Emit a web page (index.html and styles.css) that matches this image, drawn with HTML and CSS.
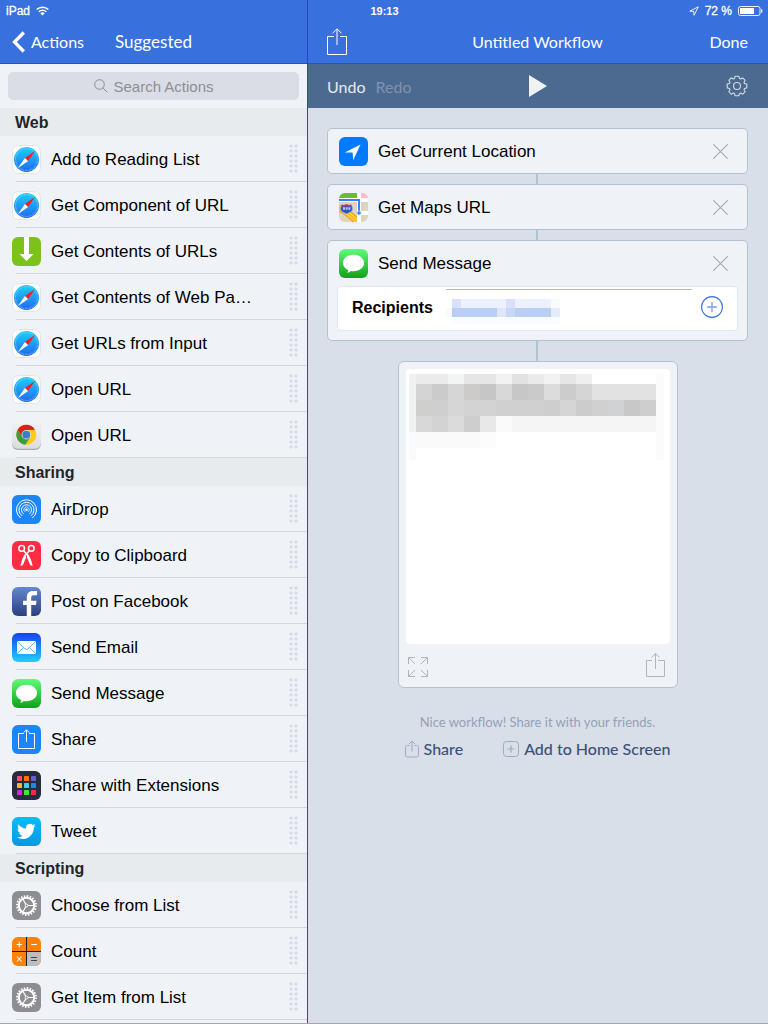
FILE: index.html
```html
<!DOCTYPE html>
<html lang="en">
<head>
    <meta charset="UTF-8">
    <meta name="viewport" content="width=device-width, initial-scale=1">
    <title>Untitled Workflow</title>
    <link rel="stylesheet" href="styles.css">
</head>
<body>
    <!-- icon sprites -->
    <svg class="sprites" width="0" height="0" aria-hidden="true">
        <defs>
            <clipPath id="tile"><rect width="29" height="29" rx="6"/></clipPath>
            <linearGradient id="g-safari" x2="0" y2="1"><stop offset="0" stop-color="#1ad2fc"/><stop offset="1" stop-color="#2167ee"/></linearGradient>
            <linearGradient id="g-chrome" x2="0" y2="1"><stop offset="0" stop-color="#f3f3f3"/><stop offset="1" stop-color="#dcdcdc"/></linearGradient>
            <linearGradient id="g-facebook" x2="0" y2="1"><stop offset="0" stop-color="#6488d0"/><stop offset="1" stop-color="#2b407c"/></linearGradient>
            <linearGradient id="g-mail" x2="0" y2="1"><stop offset="0" stop-color="#1a40ea"/><stop offset="1" stop-color="#1fd0fc"/></linearGradient>
            <linearGradient id="g-message" x2="0" y2="1"><stop offset="0" stop-color="#61fb79"/><stop offset="1" stop-color="#10a117"/></linearGradient>
            <linearGradient id="g-twitter" x2="0" y2="1"><stop offset="0" stop-color="#09bdf5"/><stop offset="1" stop-color="#0797e6"/></linearGradient>
        </defs>
        <symbol id="i-safari" viewBox="0 0 29 29">
            <rect x=".5" y=".5" width="28" height="28" rx="6" fill="#fff" stroke="#e3e4e6"/>
            <circle cx="14.5" cy="14.5" r="12.5" fill="url(#g-safari)"/>
            <circle cx="14.5" cy="14.5" r="11" fill="none" stroke="#8fd2fb" stroke-width="1.2" stroke-dasharray=".5 .9"/>
            <path d="M23.2 5.8 12.9 12.9 16.1 16.1Z" fill="#fb1c1e"/>
            <path d="M5.8 23.2 12.9 12.9 16.1 16.1Z" fill="#fff"/>
        </symbol>
        <symbol id="i-download" viewBox="0 0 29 29">
            <rect width="29" height="29" rx="6" fill="#7dc11b"/>
            <path d="M12 0H17V17H21.5L14.5 24 7.5 17H12Z" fill="#fff"/>
        </symbol>
        <symbol id="i-chrome" viewBox="0 0 29 29">
            <rect y="1" width="29" height="28" rx="6" fill="#a9a9ab"/>
            <rect width="29" height="27.8" rx="6" fill="url(#g-chrome)"/>
            <g transform="translate(14.3 13.7)">
                <circle r="10" fill="#fccb16"/>
                <path d="M-8.66-5A10 10 0 0 1 8.66-5L0-4.8-4 2.3Z" fill="#d8211b"/>
                <path d="M-8.66-5A10 10 0 0 0-1 9.95L4 2.3-4 2.3Z" fill="#3a9c3c"/>
                <circle r="4.7" fill="#dfe6ec"/>
                <circle r="3.9" fill="#3d7dca"/>
            </g>
        </symbol>
        <symbol id="i-airdrop" viewBox="0 0 29 29">
            <rect width="29" height="29" rx="6" fill="#1b85fa"/>
            <g fill="none" stroke="#fff">
                <path d="M8.8 23A10 10 0 1 1 20.2 23"/>
                <path d="M10.2 20.9A7.5 7.5 0 1 1 18.8 20.9"/>
                <path d="M11.6 18.9A5 5 0 1 1 17.4 18.9"/>
                <path d="M12.9 16.9A2.7 2.7 0 1 1 16.1 16.9" stroke-width=".7"/>
            </g>
            <circle cx="14.5" cy="14.8" r="1.3" fill="#fff"/>
        </symbol>
        <symbol id="i-scissors" viewBox="0 0 29 29">
            <rect width="29" height="29" rx="6" fill="#ff2d43"/>
            <g fill="none" stroke="#fff" stroke-width="1.5">
                <circle cx="9.7" cy="7.4" r="2.8"/>
                <circle cx="19.3" cy="7.4" r="2.8"/>
                <path d="M11.4 9.6 15.5 14M17.6 9.6 13.5 14"/>
            </g>
            <path d="M14.2 12.5 14 16.5 11 23.8Q9.4 25.2 8.4 24.4 9.2 19.5 12.2 14Z" fill="#fff"/>
            <path d="M14.8 12.5 15 16.5 18 23.8Q19.6 25.2 20.6 24.4 19.8 19.5 16.8 14Z" fill="#fff"/>
        </symbol>
        <symbol id="i-facebook" viewBox="0 0 29 29">
            <rect width="29" height="29" rx="6" fill="url(#g-facebook)"/>
            <path d="M14.8 29V18H11V13.8H14.8V11C14.8 6 17 4 21 4H25V8.3H22C20 8.3 19.2 9 19.2 11V13.8H24.5L24 18H19.2V29Z" fill="#fff"/>
        </symbol>
        <symbol id="i-mail" viewBox="0 0 29 29">
            <rect width="29" height="29" rx="6" fill="url(#g-mail)"/>
            <rect x="5" y="8" width="19" height="13" rx="1" fill="#fff"/>
            <path d="M5.3 8.5 13 15.8Q14.5 17.2 16 15.8L23.7 8.5M5.3 20.5 11.5 14.5M23.7 20.5 17.5 14.5" fill="none" stroke="#3d97f5" stroke-width=".8"/>
        </symbol>
        <symbol id="i-message" viewBox="0 0 29 29">
            <rect width="29" height="29" rx="6" fill="url(#g-message)"/>
            <path d="M14.5 5.8C20.4 5.8 25 9.3 25 14S20.4 22.2 14.5 22.2Q13 22.2 11.8 22 10.5 23.6 8.2 23.8 9.3 22.6 9.3 21.2C6 19.7 4 17 4 14 4 9.3 8.6 5.8 14.5 5.8Z" fill="#fff"/>
        </symbol>
        <symbol id="i-sharetile" viewBox="0 0 29 29">
            <rect width="29" height="29" rx="6" fill="#1b85fa"/>
            <path d="M12 8.5H6.5V23.5H22.5V8.5H17M14.5 17V5M11.7 7.5 14.5 4.7 17.3 7.5" fill="none" stroke="#fff"/>
        </symbol>
        <symbol id="i-extensions" viewBox="0 0 29 29">
            <rect width="29" height="29" rx="6" fill="#262b41"/>
            <rect x="5" y="5" width="5" height="5" rx=".6" fill="#ff4f6c"/>
            <rect x="12" y="5" width="5" height="5" rx=".6" fill="#ff7410"/>
            <rect x="19" y="5" width="5" height="5" rx=".6" fill="#6c59e2"/>
            <rect x="5" y="12" width="5" height="5" rx=".6" fill="#ffb61a"/>
            <rect x="12" y="12" width="5" height="5" rx=".6" fill="#44d3dc"/>
            <rect x="19" y="12" width="5" height="5" rx=".6" fill="#1c86fb"/>
            <rect x="5" y="19" width="5" height="5" rx=".6" fill="#d424dc"/>
            <rect x="12" y="19" width="5" height="5" rx=".6" fill="#41e635"/>
            <rect x="19" y="19" width="5" height="5" rx=".6" fill="#ff2a41"/>
        </symbol>
        <symbol id="i-twitter" viewBox="0 0 29 29">
            <rect width="29" height="29" rx="6" fill="url(#g-twitter)"/>
            <path transform="translate(5 5) scale(.78)" fill="#fff" d="M23.953 4.570a10 10 0 0 1-2.825.775 4.958 4.958 0 0 0 2.163-2.723c-.951.555-2.005.959-3.127 1.184a4.920 4.920 0 0 0-8.384 4.482C7.690 8.095 4.067 6.130 1.640 3.162a4.822 4.822 0 0 0-.666 2.475c0 1.710.87 3.213 2.188 4.096a4.904 4.904 0 0 1-2.228-.616v.06a4.923 4.923 0 0 0 3.946 4.827 4.996 4.996 0 0 1-2.212.085 4.936 4.936 0 0 0 4.604 3.417 9.867 9.867 0 0 1-6.102 2.105c-.39 0-.779-.023-1.170-.067a13.995 13.995 0 0 0 7.557 2.209c9.053 0 13.998-7.496 13.998-13.985 0-.21 0-.42-.015-.63A9.935 9.935 0 0 0 24 4.590z"/>
        </symbol>
        <symbol id="i-settings" viewBox="0 0 29 29">
            <rect width="29" height="29" rx="6" fill="#8e8d92"/>
            <g fill="none" stroke="#fff">
                <circle cx="14.5" cy="14.5" r="7.7" stroke-width="2"/>
                <circle cx="14.5" cy="14.5" r="9.4" stroke-width="2" stroke-dasharray="1.500 1.453"/>
                <path d="M16 14.5H22M13.800 13.200 10.700 8M13.800 15.800 10.700 21" stroke-width="1.200"/>
                <circle cx="14.5" cy="14.5" r="1.4"/>
            </g>
        </symbol>
        <symbol id="i-calculator" viewBox="0 0 29 29">
            <g clip-path="url(#tile)">
                <rect width="29" height="29" fill="#ff8208"/>
                <rect x="15" y="15" width="14" height="14" fill="#bdbdc0"/>
                <path d="M14.5 0V29M0 14.5H29" stroke="#231d18"/>
                <path d="M4.500 7.500H10M7.250 4.700V10.300M19 7.500H25M5 19.500 9.500 24.500M9.500 19.500 5 24.500" stroke="#fff" stroke-width="1.100"/>
                <path d="M19 20.500H25M19 23.500H25" stroke="#444" stroke-width="1.100"/>
            </g>
        </symbol>
        <symbol id="i-location" viewBox="0 0 29 29">
            <rect width="29" height="29" rx="6" fill="#007aff"/>
            <path d="M21.500 7.500 5.800 15.600 13.600 15.400 14.200 23.300Z" fill="#fff"/>
        </symbol>
        <symbol id="i-maps" viewBox="0 0 29 29">
            <g clip-path="url(#tile)">
                <rect width="29" height="29" fill="#ddd5c0"/>
                <rect width="18" height="5" fill="#67bf2f"/>
                <rect x="22" width="7" height="5" fill="#fdbccb"/>
                <path d="M18 0H22V29H18ZM0 5H29V9H0ZM18 18H29V22H18Z" fill="#fff"/>
                <path d="M0 15C8 18 12 23 20 30" fill="none" stroke="#e99a19" stroke-width="7"/>
                <path d="M0 15C8 18 12 23 20 30" fill="none" stroke="#fdd02b" stroke-width="5"/>
                <path d="M0 15C8 18 12 23 20 30" fill="none" stroke="#f2aa1d" stroke-width=".8"/>
                <path d="M18 20V29H22V22Z" fill="#fff"/>
                <path d="M0 7H20V19" fill="none" stroke="#3482f6" stroke-width="2"/>
                <circle cx="20" cy="20" r="2" fill="#3482f6" stroke="#b9d4fb" stroke-width=".8"/>
                <path d="M3 11.500Q5 12.500 7.500 11 10 12.500 12 11.500 15 16 12.500 18.500 10 19.500 7.500 21 5 19.500 2.500 18.500 0 16 3 11.500Z" fill="#2a55c9" stroke="#dbe3f5" stroke-width=".4"/>
                <path d="M3 11.500Q5 12.500 7.500 11 10 12.500 12 11.500L13 13.300H2Z" fill="#e1323c"/>
                <path d="M4 15.500H11.500" stroke="#b9c8f0" stroke-width="2.500" stroke-dasharray="2 .7"/>
            </g>
        </symbol>
        <symbol id="i-share" viewBox="0 0 20 28">
            <path d="M7 8.500H.5V26.500H19.500V8.500H13M10 17V1M5.500 5.300 10 .8 14.500 5.300" fill="none" stroke="currentColor"/>
        </symbol>
        <symbol id="i-close" viewBox="0 0 15 15">
            <path d="M.3.3 14.700 14.700M14.700.3.3 14.700" fill="none" stroke="currentColor" stroke-width="1.200"/>
        </symbol>
    </svg>

    <div class="statusbar">
        <div class="status-left">iPad
            <svg width="13" height="10" viewBox="0 0 13 10" fill="none" stroke="#fff" stroke-width="1.400">
                <path d="M.6 3.600A8.500 8.500 0 0 1 12.400 3.600M2.700 5.700A5.500 5.500 0 0 1 10.300 5.700"/>
                <path d="M4.300 7.300A3.200 3.200 0 0 1 8.700 7.300L6.500 9.500Z" fill="#fff" stroke="none"/>
            </svg>
        </div>
        <div class="status-time">19:13</div>
        <div class="status-right">
            <svg width="10" height="10" viewBox="0 0 10 10"><path d="M9.300.8.800 5.200 4.800 5.400 5 9.300Z" fill="none" stroke="#fff" stroke-width=".9"/></svg>
            <span>72 %</span>
            <svg width="25" height="10" viewBox="0 0 25 10"><rect x=".5" y=".5" width="21.500" height="9" rx="2" fill="none" stroke="#fff" stroke-width=".9"/><rect x="2" y="2" width="14" height="6" rx=".5" fill="#fff"/><path d="M23.500 3.200Q25 5 23.500 6.800Z" fill="#fff" stroke="#fff" stroke-width=".6"/></svg>
        </div>
    </div>

    <div class="app">
        <aside class="sidebar">
            <header class="nav">
                <a class="back" href="#">
                    <svg width="13" height="22" viewBox="0 0 13 22"><path d="M11.800 1.500 2.500 11 11.800 20.500" fill="none" stroke="#fff" stroke-width="3.300"/></svg>
                    Actions
                </a>
                <h2>Suggested</h2>
            </header>
            <label class="search">
                <svg width="14" height="14" viewBox="0 0 14 14" fill="none" stroke="#8e8e93"><circle cx="5.500" cy="5.500" r="4.800"/><path d="M9 9 13.300 13.300"/></svg>
                <input type="text" placeholder="Search Actions" aria-label="Search Actions">
            </label>

            <h3>Web</h3>
            <ul class="actions">
                <li><svg class="icon"><use href="#i-safari"/></svg><span class="name">Add to Reading List</span><span class="grip"></span></li>
                <li><svg class="icon"><use href="#i-safari"/></svg><span class="name">Get Component of URL</span><span class="grip"></span></li>
                <li><svg class="icon"><use href="#i-download"/></svg><span class="name">Get Contents of URLs</span><span class="grip"></span></li>
                <li><svg class="icon"><use href="#i-safari"/></svg><span class="name">Get Contents of Web Pa…</span><span class="grip"></span></li>
                <li><svg class="icon"><use href="#i-safari"/></svg><span class="name">Get URLs from Input</span><span class="grip"></span></li>
                <li><svg class="icon"><use href="#i-safari"/></svg><span class="name">Open URL</span><span class="grip"></span></li>
                <li><svg class="icon"><use href="#i-chrome"/></svg><span class="name">Open URL</span><span class="grip"></span></li>
            </ul>

            <h3>Sharing</h3>
            <ul class="actions">
                <li><svg class="icon"><use href="#i-airdrop"/></svg><span class="name">AirDrop</span><span class="grip"></span></li>
                <li><svg class="icon"><use href="#i-scissors"/></svg><span class="name">Copy to Clipboard</span><span class="grip"></span></li>
                <li><svg class="icon"><use href="#i-facebook"/></svg><span class="name">Post on Facebook</span><span class="grip"></span></li>
                <li><svg class="icon"><use href="#i-mail"/></svg><span class="name">Send Email</span><span class="grip"></span></li>
                <li><svg class="icon"><use href="#i-message"/></svg><span class="name">Send Message</span><span class="grip"></span></li>
                <li><svg class="icon"><use href="#i-sharetile"/></svg><span class="name">Share</span><span class="grip"></span></li>
                <li><svg class="icon"><use href="#i-extensions"/></svg><span class="name">Share with Extensions</span><span class="grip"></span></li>
                <li><svg class="icon"><use href="#i-twitter"/></svg><span class="name">Tweet</span><span class="grip"></span></li>
            </ul>

            <h3>Scripting</h3>
            <ul class="actions">
                <li><svg class="icon"><use href="#i-settings"/></svg><span class="name">Choose from List</span><span class="grip"></span></li>
                <li><svg class="icon"><use href="#i-calculator"/></svg><span class="name">Count</span><span class="grip"></span></li>
                <li><svg class="icon"><use href="#i-settings"/></svg><span class="name">Get Item from List</span><span class="grip"></span></li>
            </ul>
        </aside>

        <main class="editor">
            <header class="nav">
                <button type="button" class="share" aria-label="Share"><svg width="20" height="28"><use href="#i-share"/></svg></button>
                <h1>Untitled Workflow</h1>
                <button type="button" class="done">Done</button>
            </header>
            <div class="toolbar">
                <div class="history">
                    <button type="button">Undo</button>
                    <button type="button" disabled>Redo</button>
                </div>
                <button type="button" aria-label="Run"><svg width="18" height="22" viewBox="0 0 18 22"><path d="M0 0 18 11 0 22Z" fill="#eff1f5"/></svg></button>
                <button type="button" class="gear" aria-label="Settings">
                    <svg width="22" height="22" viewBox="-11 -11 22 22" fill="none" stroke="#d3dbe6" stroke-width="1.100">
                        <path d="M-1.900-9.800H1.900L2.500-7.500 3.800-7 5.700-8.200 8.200-5.700 7-3.800 7.500-2.500 9.800-1.900V1.900L7.500 2.500 7 3.800 8.200 5.700 5.700 8.200 3.800 7 2.500 7.500 1.900 9.800H-1.900L-2.500 7.500-3.800 7-5.700 8.200-8.200 5.700-7 3.800-7.500 2.500-9.800 1.900V-1.900L-7.500-2.500-7-3.800-8.200-5.700-5.700-8.200-3.800-7-2.500-7.500Z" stroke-linejoin="round"/>
                        <circle r="3.500"/>
                    </svg>
                </button>
            </div>

            <div class="canvas">
                <section class="card">
                    <div class="card-head">
                        <svg class="icon"><use href="#i-location"/></svg>
                        <span class="name">Get Current Location</span>
                        <button type="button" class="close" aria-label="Remove"><svg width="15" height="15"><use href="#i-close"/></svg></button>
                    </div>
                </section>
                <div class="link"></div>
                <section class="card">
                    <div class="card-head">
                        <svg class="icon"><use href="#i-maps"/></svg>
                        <span class="name">Get Maps URL</span>
                        <button type="button" class="close" aria-label="Remove"><svg width="15" height="15"><use href="#i-close"/></svg></button>
                    </div>
                </section>
                <div class="link"></div>
                <section class="card">
                    <div class="card-head">
                        <svg class="icon"><use href="#i-message"/></svg>
                        <span class="name">Send Message</span>
                        <button type="button" class="close" aria-label="Remove"><svg width="15" height="15"><use href="#i-close"/></svg></button>
                    </div>
                    <div class="recipients">
                        <strong>Recipients</strong>
                        <div class="tokens">
                            <svg width="120" height="27" viewBox="0 0 120 27" shape-rendering="crispEdges" aria-hidden="true">
                                <path d="M0 9H6V18H0ZM6 18H114V25H6Z" fill="#fafbfe"/>
                                <path d="M6 0H114V9H6Z" fill="#ecf1fd"/>
                                <path d="M6 0H15V9H6ZM60 0H69V9H60Z" fill="#d7e2fa"/>
                                <path d="M6 9H105V18H6Z" fill="#bacdf3"/>
                                <path d="M51 9H60V18H51Z" fill="#dee7fa"/>
                                <path d="M60 9H69V18H60Z" fill="#c8d7f6"/>
                                <path d="M105 9H114V18H105Z" fill="#e5ecf6"/>
                                <path d="M105 0H114V9H105Z" fill="#f9fafd"/>
                            </svg>
                        </div>
                        <button type="button" class="add" aria-label="Add recipient">
                            <svg width="22" height="22" viewBox="0 0 22 22" fill="none"><circle cx="11" cy="11" r="10.400" stroke="#3a70dc" stroke-width="1.100"/><path d="M11 6V16M6 11H16" stroke="#7fa1ea" stroke-width="1.400"/></svg>
                        </button>
                    </div>
                </section>
                <div class="link long"></div>
                <section class="result">
                    <div class="preview">
                        <svg width="256" height="88" viewBox="0 0 256 88" shape-rendering="crispEdges" aria-hidden="true">
                            <path d="M0 0H7V58H0Z" fill="#f0f1f2"/><path d="M0 58H7V86H0Z" fill="#f9fafb"/>
                            <path d="M247 0H255V86H247Z" fill="#fbfbfb"/>
                            <!-- one group per row of blocks -->
                            <g>
                                <path d="M7 0H39V10H7Z" fill="#ebebeb"/><path d="M39 0H55V10H39Z" fill="#f2f5f3"/><path d="M55 0H87V10H55Z" fill="#e6e6e6"/><path d="M87 0H103V10H87Z" fill="#f2f2f2"/><path d="M103 0H119V10H103Z" fill="#e2e2e2"/><path d="M119 0H135V10H119Z" fill="#eaeaea"/><path d="M135 0H151V10H135Z" fill="#f2f2f2"/><path d="M151 0H167V10H151Z" fill="#e6e6e6"/><path d="M167 0H183V10H167Z" fill="#efefef"/>
                            </g>
                            <g transform="translate(7 10)">
                                <path d="M0 0H16V16H0Z" fill="#d4d4d4"/><path d="M16 0H32V16H16Z" fill="#cbcbcb"/><path d="M32 0H48V16H32Z" fill="#d6d6d6"/><path d="M48 0H64V16H48Z" fill="#cccbc8"/><path d="M64 0H80V16H64Z" fill="#c6c6c6"/><path d="M80 0H96V16H80Z" fill="#d8d8d8"/><path d="M96 0H112V16H96Z" fill="#c7c7c7"/><path d="M112 0H128V16H112Z" fill="#cacaca"/><path d="M128 0H144V16H128Z" fill="#dcdcdc"/><path d="M144 0H160V16H144Z" fill="#cccccc"/><path d="M160 0H176V16H160Z" fill="#d5d5d5"/><path d="M176 0H240V16H176Z" fill="#e2e2e2"/>
                            </g>
                            <g transform="translate(7 26)">
                                <path d="M0 0H16V16H0Z" fill="#cfcfcb"/><path d="M16 0H32V16H16Z" fill="#cfcfcf"/><path d="M32 0H48V16H32Z" fill="#d6d6d6"/><path d="M48 0H80V16H48Z" fill="#d3d3d3"/><path d="M80 0H128V16H80Z" fill="#d0d0d0"/><path d="M128 0H144V16H128Z" fill="#cecece"/><path d="M144 0H160V16H144Z" fill="#d5d5d5"/><path d="M160 0H176V16H160Z" fill="#cccccc"/><path d="M176 0H192V16H176Z" fill="#d0d0d0"/><path d="M192 0H208V16H192Z" fill="#d0d3d3"/><path d="M208 0H224V16H208Z" fill="#c8c8c8"/><path d="M224 0H240V16H224Z" fill="#cecece"/>
                            </g>
                            <g transform="translate(7 42)">
                                <path d="M0 0H16V16H0Z" fill="#d8d8d8"/><path d="M16 0H32V16H16Z" fill="#d3d3d3"/><path d="M32 0H48V16H32Z" fill="#dbdbdb"/><path d="M48 0H64V16H48Z" fill="#cecece"/><path d="M64 0H80V16H64Z" fill="#e8e8e8"/><path d="M80 0H96V16H80Z" fill="#fafafa"/><path d="M96 0H240V16H96Z" fill="#f5f5f5"/>
                            </g>
                            <path d="M7 58H71V74H7Z" fill="#fafafa"/><path d="M71 58H87V74H71Z" fill="#fcfcfc"/>
                        </svg>
                    </div>
                    <div class="result-bar">
                        <button type="button" aria-label="Expand"><svg width="22" height="22" viewBox="0 0 22 22" fill="none" stroke="currentColor"><path d="M1.500 8V1.500H8M1.500 1.500 8 8M14 1.500H20.500V8M20.500 1.500 14 8M1.500 14V20.500H8M1.500 20.500 8 14M14 20.500H20.500V14M20.500 20.500 14 14"/></svg></button>
                        <button type="button" aria-label="Share result"><svg width="20" height="26" viewBox="0 0 20 26" fill="none" stroke="currentColor"><path d="M7 8.500H1.500V24.500H19.500V8.500H13M10.500 17V1.500M6.500 5.500 10.500 1.500 14.500 5.500"/></svg></button>
                    </div>
                </section>

                <p class="hint">Nice workflow! Share it with your friends.</p>
                <div class="links">
                    <a href="#"><svg width="14" height="18" viewBox="0 0 14 18" fill="none" stroke="#9fabc1"><path d="M4.500 5.500H2.500Q.5 5.500.5 7.500V15Q.5 17 2.500 17H11.500Q13.500 17 13.500 15V7.500Q13.500 5.500 11.500 5.500H9.500M7 11.500V1M4 4 7 1 10 4"/></svg>Share</a>
                    <a href="#"><svg width="16" height="18" viewBox="0 0 16 18" fill="none" stroke="#9fabc1"><rect x=".5" y="1.500" width="15" height="15" rx="3"/><path d="M8 5.500V12.500M4.500 9H11.500" stroke-width="1.200"/></svg>Add to Home Screen</a>
                </div>
            </div>
        </main>
    </div>
</body>
</html>
```

FILE: styles.css
```css
* {
    box-sizing: border-box;
    margin: 0;
    padding: 0;
}

body {
    font-family: "Liberation Sans", Arial, sans-serif;
    font-size: 17px;
    color: #000;
    background: #d8dfe9;
}

.sprites {
    position: absolute;
}

svg {
    display: block;
    flex: none;
}

button {
    border: 0;
    background: none;
    font: inherit;
    color: inherit;
    cursor: pointer;
}

a {
    color: inherit;
    text-decoration: none;
}

/* status bar, over both panes */
.statusbar {
    position: absolute;
    top: 0;
    left: 0;
    right: 0;
    height: 20px;
    padding: 2px 5px 0 6px;
    display: grid;
    grid-template-columns: 1fr auto 1fr;
    align-items: center;
    font-size: 12px;
    line-height: 16px;
    color: #fff;
    -webkit-text-stroke: 0.3px #fff;
}

.status-left, .status-right {
    display: flex;
    align-items: center;
    gap: 6px;
}

.status-right {
    justify-content: flex-end;
}

.status-time {
    font-size: 11px;
    font-weight: bold;
    -webkit-text-stroke: 0;
}

.app {
    display: flex;
    min-height: 100vh;
    border-bottom: 1px solid #a3a6ac;
}

.nav {
    height: 64px;
    background: #3870dd;
    border-bottom: 1px solid #2a55a8;
    color: #fff;
    font-family: Lato, sans-serif;
    font-size: 16px;
}

.nav h1 {
    font-size: 16px;
    font-weight: normal;
}

.nav h2 {
    font-size: 17px;
    font-weight: normal;
}

/* left pane */
.sidebar {
    flex: none;
    width: 308px;
    border-right: 1px solid #2a4f96;
    background: #eff3f8;
}

.sidebar .nav {
    display: grid;
    grid-template-columns: 1fr auto 1fr;
    align-items: center;
    padding: 20px 12px 0;
}

.back {
    display: flex;
    align-items: center;
    gap: 6px;
}

.search {
    display: flex;
    align-items: center;
    justify-content: center;
    gap: 6px;
    height: 28px;
    margin: 8px;
    border-radius: 5px;
    background: #dadde5;
}

.search input {
    width: 100px;
    border: 0;
    outline: 0;
    background: none;
    font: 15px "Liberation Sans", Arial, sans-serif;
}

.search input::placeholder {
    color: #8e8e93;
}

.sidebar h3 {
    height: 28px;
    padding-left: 15px;
    background: #e7ebee;
    color: #222528;
    font-size: 16px;
    line-height: 29px;
}

.actions {
    list-style: none;
}

.actions li {
    display: flex;
    align-items: center;
    gap: 10px;
    height: 46px;
    padding: 0 9px 0 12px;
    background: linear-gradient(#d3d7dc, #d3d7dc) 16px 100% / 100% 1px no-repeat;
}

.icon {
    width: 29px;
    height: 29px;
}

.name {
    flex: 1;
    padding-top: 2px;
    line-height: 20px;
    white-space: nowrap;
}

.grip {
    width: 9px;
    height: 30px;
    background: radial-gradient(circle at 2px 2px, #d2d9e8 1px, transparent 2px) 0 0 / 5px 5px;
}

/* right pane */
.editor {
    flex: 1;
    min-width: 0;
}

.editor .nav, .toolbar {
    display: grid;
    grid-template-columns: 1fr auto 1fr;
    align-items: center;
    padding: 0 20px 0 19px;
}

.editor .nav {
    padding-top: 20px;
}

.share {
    justify-self: start;
}

.done, .gear {
    justify-self: end;
}

.toolbar {
    height: 44px;
    background: #4c698f;
    color: #e6ebf1;
    font-family: Lato, sans-serif;
    font-size: 16px;
}

.history {
    display: flex;
    gap: 10px;
}

.history button:disabled {
    color: #7e93b0;
}

.canvas {
    padding: 20px 20px 20px 19px;
}

.card {
    border: 1px solid #b2c3d0;
    border-radius: 5px;
    background: #eff3f8;
}

.card-head {
    display: flex;
    align-items: center;
    gap: 10px;
    height: 44px;
    padding: 0 19px 0 11px;
}

.close {
    color: #a9abaf;
}

.link {
    width: 2px;
    height: 10px;
    margin-left: calc(50% - 2px);
    background: #b2c3d0;
}

.link.long {
    height: 20px;
}

.recipients {
    display: flex;
    height: 45px;
    margin: 1px 9px 9px;
    padding: 0 14px;
    border: 1px solid #dfe6ee;
    border-radius: 4px;
    background: #fff;
}

.recipients strong {
    width: 94px;
    font-size: 16px;
    line-height: 42px;
}

.tokens {
    flex: 1;
    margin: 2px 9px 0 0;
    padding-top: 9px;
    border-top: 1px solid #b9bbb0;
}

.add {
    padding-bottom: 3px;
}

.result {
    width: 280px;
    margin: 0 auto;
    padding: 7px;
    border: 1px solid #b2c3d0;
    border-radius: 6px;
    background: #eff3f8;
}

.preview {
    height: 275px;
    padding: 5px 3px;
    border-radius: 4px;
    background: #fff;
}

.result-bar {
    display: flex;
    align-items: flex-end;
    justify-content: space-between;
    padding: 8px 5px 2px 1px;
    color: #b3b5b8;
}

.hint {
    margin-top: 24px;
    text-align: center;
    font: 13px/20px Lato, sans-serif;
    color: #95a1b7;
}

.links {
    display: flex;
    justify-content: center;
    gap: 40px;
    margin-top: 7px;
    font: 500 16px/20px Lato, sans-serif;
    color: #3c5078;
}

.links a {
    display: flex;
    align-items: center;
    gap: 5px;
}
```
